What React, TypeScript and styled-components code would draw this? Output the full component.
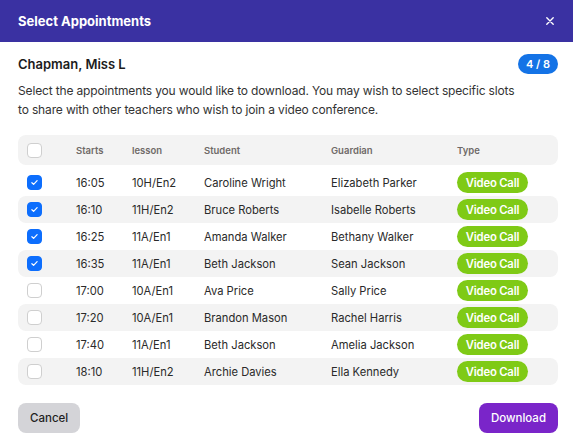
import React, { useState } from "react";
import styled, { createGlobalStyle } from "styled-components";

const GlobalStyle = createGlobalStyle`
  html, body {
    margin: 0;
    padding: 0;
    background: #ffffff;
  }
  body {
    font-family: "Inter", "Noto Sans", sans-serif;
    color: #222;
  }
  * { box-sizing: border-box; }
`;

type Appointment = {
  start: string;
  lesson: string;
  student: string;
  guardian: string;
  type: string;
};

const appointments: Appointment[] = [
  { start: "16:05", lesson: "10H/En2", student: "Caroline Wright", guardian: "Elizabeth Parker", type: "Video Call" },
  { start: "16:10", lesson: "11H/En2", student: "Bruce Roberts", guardian: "Isabelle Roberts", type: "Video Call" },
  { start: "16:25", lesson: "11A/En1", student: "Amanda Walker", guardian: "Bethany Walker", type: "Video Call" },
  { start: "16:35", lesson: "11A/En1", student: "Beth Jackson", guardian: "Sean Jackson", type: "Video Call" },
  { start: "17:00", lesson: "10A/En1", student: "Ava Price", guardian: "Sally Price", type: "Video Call" },
  { start: "17:20", lesson: "10A/En1", student: "Brandon Mason", guardian: "Rachel Harris", type: "Video Call" },
  { start: "17:40", lesson: "11A/En1", student: "Beth Jackson", guardian: "Amelia Jackson", type: "Video Call" },
  { start: "18:10", lesson: "11H/En2", student: "Archie Davies", guardian: "Ella Kennedy", type: "Video Call" },
];

const Modal = styled.div`
  width: 573px;
  height: 437px;
  display: flex;
  flex-direction: column;
  background: #fff;
  overflow: hidden;
`;

const Header = styled.header`
  height: 42px;
  flex: none;
  display: flex;
  align-items: center;
  justify-content: space-between;
  padding: 0 17px 0 18px;
  background: #3a31a2;
  color: #fff;
`;

const Title = styled.h1`
  margin: 0;
  font-size: 13px;
  font-weight: 700;
`;

const CloseButton = styled.button`
  border: 0;
  background: none;
  color: #fff;
  padding: 0;
  width: 12px;
  height: 12px;
  display: flex;
  align-items: center;
  justify-content: center;
  cursor: pointer;
`;

const Body = styled.div`
  flex: 1;
  display: flex;
  flex-direction: column;
  padding: 11px 15px 4px 18px;
`;

const NameRow = styled.div`
  display: flex;
  align-items: center;
  justify-content: space-between;
  height: 22px;
`;

const Name = styled.h2`
  margin: 0;
  font-size: 13px;
  font-weight: 600;
  color: #1c1c1c;
`;

const CountBadge = styled.span`
  height: 20px;
  padding: 0 8px;
  border-radius: 10px;
  background: #1473e6;
  color: #fff;
  font-size: 11px;
  font-weight: 600;
  display: flex;
  align-items: center;
`;

const Intro = styled.p`
  margin: 6px 0 0;
  max-width: 505px;
  font-size: 12px;
  line-height: 19px;
  color: #333;
  letter-spacing: -0.15px;
`;

const Table = styled.div`
  margin-top: 16px;
  display: flex;
  flex-direction: column;
`;

const cols = "49px 56px 72px 127px 126px 1fr";

const HeadRow = styled.div`
  display: grid;
  grid-template-columns: ${cols};
  align-items: center;
  height: 30px;
  padding-left: 9px;
  margin-bottom: 4px;
  background: #f3f3f3;
  border-radius: 8px;
`;

const HeadCell = styled.span`
  font-size: 9.5px;
  font-weight: 600;
  color: #6f6a68;
`;

const Row = styled.div<{ $striped: boolean }>`
  display: grid;
  grid-template-columns: ${cols};
  align-items: center;
  height: 27px;
  padding-left: 9px;
  background: ${(p) => (p.$striped ? "#f3f3f3" : "transparent")};
  border-radius: 8px;
`;

const Cell = styled.span`
  font-size: 11.2px;
  color: #2a2a2a;
  white-space: nowrap;
`;

const Check = styled.button<{ $on: boolean }>`
  width: 15px;
  height: 15px;
  padding: 0;
  border-radius: 4px;
  border: 1px solid ${(p) => (p.$on ? "#0d6efd" : "#cfcfcf")};
  background: ${(p) => (p.$on ? "#0d6efd" : "#fff")};
  display: flex;
  align-items: center;
  justify-content: center;
  cursor: pointer;
`;

const TypePill = styled.span`
  width: 71px;
  height: 21px;
  border-radius: 11px;
  background: #7fca16;
  color: #fff;
  font-size: 11.3px;
  font-weight: 600;
  display: flex;
  align-items: center;
  justify-content: center;
  letter-spacing: -0.2px;
`;

const Footer = styled.div`
  margin-top: auto;
  display: flex;
  justify-content: space-between;
  align-items: center;
`;

const Button = styled.button<{ $variant: "muted" | "primary" }>`
  height: 30px;
  padding: 0 12px;
  border: 0;
  border-radius: 8px;
  font-family: inherit;
  font-size: 11.5px;
  font-weight: 500;
  cursor: pointer;
  background: ${(p) => (p.$variant === "primary" ? "#7a25c9" : "#d4d4d8")};
  color: ${(p) => (p.$variant === "primary" ? "#fff" : "#1f1f1f")};
`;

const Tick = () => (
  <svg width="9" height="9" viewBox="0 0 12 12" fill="none">
    <path d="M2.5 6.3l2.3 2.3 4.7-5" stroke="#fff" strokeWidth="1.6" strokeLinecap="round" strokeLinejoin="round" />
  </svg>
);

export default function App() {
  const [selected, setSelected] = useState<boolean[]>(appointments.map((_, i) => i < 4));
  const count = selected.filter(Boolean).length;
  const all = count === appointments.length;

  const toggle = (i: number) => setSelected((s) => s.map((v, j) => (j === i ? !v : v)));
  const toggleAll = () => setSelected(appointments.map(() => !all));

  return (
    <>
      <GlobalStyle />
      <Modal>
        <Header>
          <Title>Select Appointments</Title>
          <CloseButton aria-label="Close">
            <svg width="8" height="8" viewBox="0 0 10 10">
              <path d="M1 1l8 8M9 1l-8 8" stroke="#fff" strokeWidth="1.7" strokeLinecap="round" />
            </svg>
          </CloseButton>
        </Header>
        <Body>
          <NameRow>
            <Name>Chapman, Miss L</Name>
            <CountBadge>
              {count} / {appointments.length}
            </CountBadge>
          </NameRow>
          <Intro>
            Select the appointments you would like to download. You may wish to select specific slots to share
            with other teachers who wish to join a video conference.
          </Intro>
          <Table>
            <HeadRow>
              <Check $on={all} onClick={toggleAll}>{all && <Tick />}</Check>
              <HeadCell>Starts</HeadCell>
              <HeadCell>lesson</HeadCell>
              <HeadCell>Student</HeadCell>
              <HeadCell>Guardian</HeadCell>
              <HeadCell>Type</HeadCell>
            </HeadRow>
            {appointments.map((a, i) => (
              <Row key={i} $striped={i % 2 === 1}>
                <Check $on={selected[i]} onClick={() => toggle(i)}>
                  {selected[i] && <Tick />}
                </Check>
                <Cell>{a.start}</Cell>
                <Cell>{a.lesson}</Cell>
                <Cell>{a.student}</Cell>
                <Cell>{a.guardian}</Cell>
                <TypePill>{a.type}</TypePill>
              </Row>
            ))}
          </Table>
          <Footer>
            <Button $variant="muted">Cancel</Button>
            <Button $variant="primary">Download</Button>
          </Footer>
        </Body>
      </Modal>
    </>
  );
}
